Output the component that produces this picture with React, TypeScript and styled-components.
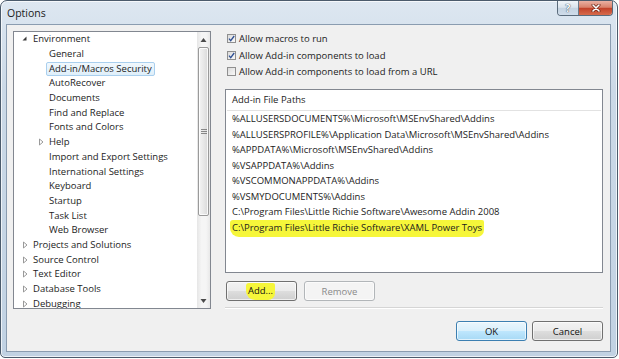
import React from "react";
import styled, { createGlobalStyle } from "styled-components";

const GlobalStyle = createGlobalStyle`
  html, body {
    margin: 0;
    padding: 0;
    background: #ffffff;
  }
  body {
    font-family: "Open Sans", "Noto Sans", "DejaVu Sans", sans-serif;
    font-size: 9.5px;
    color: #1c1c1c;
  }
  * { box-sizing: border-box; }
`;

const Window = styled.div`
  width: 618px;
  height: 358px;
  display: flex;
  flex-direction: column;
  padding: 0 6px 5px 5px;
  border: 1px solid #4b5b6c;
  border-radius: 7px 7px 5px 5px;
  background: linear-gradient(180deg, #dde7f1 0%, #cbd9e7 25%, #c1d2e3 100%);
  box-shadow: inset 0 0 0 1px rgba(255, 255, 255, 0.7);
`;

const TitleBar = styled.div`
  height: 23px;
  display: flex;
  align-items: flex-start;
  justify-content: space-between;
`;

const Title = styled.div`
  padding: 5px 0 0 1px;
  font-size: 10.5px;
  line-height: 14px;
  color: #1a1a1a;
`;

const CaptionGroup = styled.div`
  display: flex;
  height: 15px;
  margin-right: -2px;
  border: 1px solid #5a6b7b;
  border-top: none;
  border-radius: 0 0 4px 4px;
  overflow: hidden;
`;

const CaptionButton = styled.div<{ $close?: boolean }>`
  width: ${(p) => (p.$close ? 34 : 20)}px;
  display: flex;
  align-items: center;
  justify-content: center;
  font-size: 10px;
  font-weight: bold;
  color: #ffffff;
  text-shadow: 0 0 1px #3b4c5e, 0 0 1px #3b4c5e;
  background: ${(p) =>
    p.$close
      ? "linear-gradient(180deg, #eab0a2 0%, #d9826c 45%, #c2422a 52%, #d66b4c 100%)"
      : "linear-gradient(180deg, #f0f4f8 0%, #dbe4ed 45%, #c4d3e1 52%, #cfdcea 100%)"};
  & + & {
    border-left: 1px solid #6a7b8b;
  }
`;

const Client = styled.div`
  flex: 1;
  display: flex;
  flex-direction: column;
  border: 1px solid #8a9cb0;
  background: #f0f0f0;
  padding: 6px 7px 0 6px;
`;

const TopRow = styled.div`
  height: 278px;
  display: flex;
  gap: 14px;
`;

const Tree = styled.div`
  width: 198px;
  height: 278px;
  display: flex;
  border: 1px solid #828790;
  background: #ffffff;
`;

const TreeList = styled.div`
  flex: 1;
  overflow: hidden;
`;

const TreeRow = styled.div<{ $level: number }>`
  height: 14.7px;
  line-height: 14.7px;
  display: flex;
  align-items: center;
  padding-left: ${(p) => 6 + p.$level * 16}px;
  white-space: nowrap;
`;

const Expander = styled.span`
  width: 13px;
  flex: none;
  display: flex;
  align-items: center;
  padding-left: 2px;
`;

const TreeLabel = styled.span<{ $selected?: boolean }>`
  margin-left: ${(p) => (p.$selected ? -3 : 0)}px;
  padding: 0 ${(p) => (p.$selected ? 2 : 0)}px;
  height: 14px;
  line-height: 13px;
  border: ${(p) => (p.$selected ? "1px solid #a9cfee" : "none")};
  border-radius: 2px;
  background: ${(p) =>
    p.$selected ? "linear-gradient(180deg, #f1f8fd 0%, #dfeffa 100%)" : "transparent"};
  line-height: ${(p) => (p.$selected ? 12.5 : 14)}px;
`;

const ScrollBar = styled.div`
  width: 13px;
  display: flex;
  flex-direction: column;
  background: linear-gradient(90deg, #e6e6e6 0%, #f5f5f5 35%, #f5f5f5 70%, #e8e8e8 100%);
`;

const ScrollArrow = styled.div`
  height: 15px;
  flex: none;
  display: flex;
  align-items: center;
  justify-content: center;
`;

const ScrollTrack = styled.div`
  flex: 1;
  padding: 0 1px;
`;

const Thumb = styled.div`
  height: 169px;
  display: flex;
  align-items: center;
  justify-content: center;
  border: 1px solid #9a9a9a;
  border-radius: 2px;
  background: linear-gradient(90deg, #f4f4f4 0%, #e8e8e8 50%, #d9d9d9 100%);
  box-shadow: inset 0 0 0 1px rgba(255, 255, 255, 0.8);
`;

const RightColumn = styled.div`
  flex: 1;
  display: flex;
  flex-direction: column;
`;

const CheckList = styled.div`
  margin-top: -1px;
`;

const CheckRow = styled.label`
  height: 16.7px;
  display: flex;
  align-items: center;
  gap: 3px;
  padding-left: 2px;
  white-space: nowrap;
`;

const PathBox = styled.div`
  margin-top: 9px;
  height: 185px;
  border: 1px solid #828790;
  background: #ffffff;
`;

const PathHeader = styled.div`
  height: 21px;
  line-height: 20px;
  margin: 0 1px;
  padding-left: 5px;
  border-bottom: 1px solid #e2e2e2;
`;

const PathRow = styled.div`
  height: 15.5px;
  line-height: 15.5px;
  padding-left: 6px;
  white-space: nowrap;
`;

const Marker = styled.span`
  margin-left: -2px;
  padding: 1px 2px 3px;
  border-radius: 3px 2px 7px 9px;
  background: #f6f63a;
`;

const ButtonRow = styled.div`
  display: flex;
  gap: 7px;
  margin-top: 8px;
  padding-left: 1px;
`;

const Button = styled.div<{ $disabled?: boolean; $default?: boolean }>`
  width: 71px;
  height: 20px;
  display: flex;
  align-items: center;
  justify-content: center;
  border-radius: 3px;
  border: 1px solid
    ${(p) => (p.$disabled ? "#b2b6b9" : p.$default ? "#3c7fb1" : "#707070")};
  color: ${(p) => (p.$disabled ? "#8a8a8a" : "#111111")};
  background: ${(p) =>
    p.$disabled
      ? "#f4f4f4"
      : p.$default
      ? "linear-gradient(180deg, #eaf6fd 0%, #d9f0fc 48%, #bee6fd 52%, #a7d9f5 100%)"
      : "linear-gradient(180deg, #f2f2f2 0%, #ebebeb 48%, #dddddd 52%, #cfcfcf 100%)"};
  box-shadow: inset 0 0 0 1px rgba(255, 255, 255, 0.65);
`;

const Separator = styled.div`
  margin-top: 6px;
  border-top: 1px solid #d5d5d5;
  border-bottom: 1px solid #ffffff;
`;

const BottomRow = styled.div`
  display: flex;
  justify-content: flex-end;
  gap: 5px;
  margin-top: 12px;
`;

type TreeItem = { label: string; level: number; exp?: "open" | "closed"; selected?: boolean };

const treeItems: TreeItem[] = [
  { label: "Environment", level: 0, exp: "open" },
  { label: "General", level: 1 },
  { label: "Add-in/Macros Security", level: 1, selected: true },
  { label: "AutoRecover", level: 1 },
  { label: "Documents", level: 1 },
  { label: "Find and Replace", level: 1 },
  { label: "Fonts and Colors", level: 1 },
  { label: "Help", level: 1, exp: "closed" },
  { label: "Import and Export Settings", level: 1 },
  { label: "International Settings", level: 1 },
  { label: "Keyboard", level: 1 },
  { label: "Startup", level: 1 },
  { label: "Task List", level: 1 },
  { label: "Web Browser", level: 1 },
  { label: "Projects and Solutions", level: 0, exp: "closed" },
  { label: "Source Control", level: 0, exp: "closed" },
  { label: "Text Editor", level: 0, exp: "closed" },
  { label: "Database Tools", level: 0, exp: "closed" },
  { label: "Debugging", level: 0, exp: "closed" },
];

const paths = [
  "%ALLUSERSDOCUMENTS%\\Microsoft\\MSEnvShared\\Addins",
  "%ALLUSERSPROFILE%\\Application Data\\Microsoft\\MSEnvShared\\Addins",
  "%APPDATA%\\Microsoft\\MSEnvShared\\Addins",
  "%VSAPPDATA%\\Addins",
  "%VSCOMMONAPPDATA%\\Addins",
  "%VSMYDOCUMENTS%\\Addins",
  "C:\\Program Files\\Little Richie Software\\Awesome Addin 2008",
];

const checks = [
  { label: "Allow macros to run", checked: true },
  { label: "Allow Add-in components to load", checked: true },
  { label: "Allow Add-in components to load from a URL", checked: false },
];

const ExpanderIcon = ({ kind }: { kind: "open" | "closed" }) =>
  kind === "open" ? (
    <svg width="6" height="6" viewBox="0 0 6 6">
      <path d="M4.5 0.5 L4.5 4.5 L0.5 4.5 Z" fill="#3a3a3a" />
    </svg>
  ) : (
    <svg width="7" height="8" viewBox="0 0 7 8">
      <path d="M1.5 1 L5 4 L1.5 7 Z" fill="#ffffff" stroke="#8e8e8e" strokeWidth="0.9" />
    </svg>
  );

const CheckBox = ({ checked, id }: { checked: boolean; id: string }) => (
  <svg width="9" height="9" viewBox="0 0 9 9">
    <defs>
      <linearGradient id={id} x1="0" y1="0" x2="1" y2="1">
        <stop offset="0" stopColor="#d9d9d9" />
        <stop offset="1" stopColor="#fbfbfb" />
      </linearGradient>
    </defs>
    <rect x="0.5" y="0.5" width="8" height="8" fill={`url(#${id})`} stroke="#8f8f8f" />
    {checked && (
      <path d="M2 4.6 L3.7 6.6 L7.2 2" fill="none" stroke="#2e4f93" strokeWidth="1.3" />
    )}
  </svg>
);

const CloseGlyph = () => (
  <svg width="10" height="8" viewBox="0 0 10 8">
    <path d="M2 1 L8 7 M8 1 L2 7" stroke="#6b2516" strokeWidth="3" strokeLinecap="round" />
    <path d="M2 1 L8 7 M8 1 L2 7" stroke="#ffffff" strokeWidth="1.6" strokeLinecap="round" />
  </svg>
);

const Grip = () => (
  <svg width="6" height="5" viewBox="0 0 6 5">
    <path d="M0 0.5 H6 M0 2.5 H6 M0 4.5 H6" stroke="#6f6f6f" strokeWidth="0.8" />
  </svg>
);

const Arrow = ({ up }: { up?: boolean }) => (
  <svg width="7" height="4" viewBox="0 0 7 4">
    <path d={up ? "M3.5 0 L6.5 4 L0.5 4 Z" : "M0.5 0 L6.5 0 L3.5 4 Z"} fill="#4a4a4a" />
  </svg>
);

const App = () => {
  return (
    <>
      <GlobalStyle />
      <Window>
        <TitleBar>
          <Title>Options</Title>
          <CaptionGroup>
            <CaptionButton>?</CaptionButton>
            <CaptionButton $close>
              <CloseGlyph />
            </CaptionButton>
          </CaptionGroup>
        </TitleBar>

        <Client>
          <TopRow>
            <Tree>
              <TreeList>
                {treeItems.map((item) => (
                  <TreeRow key={item.label} $level={item.level}>
                    <Expander>{item.exp && <ExpanderIcon kind={item.exp} />}</Expander>
                    <TreeLabel $selected={item.selected}>{item.label}</TreeLabel>
                  </TreeRow>
                ))}
              </TreeList>
              <ScrollBar>
                <ScrollArrow>
                  <Arrow up />
                </ScrollArrow>
                <ScrollTrack>
                  <Thumb>
                    <Grip />
                  </Thumb>
                </ScrollTrack>
                <ScrollArrow>
                  <Arrow />
                </ScrollArrow>
              </ScrollBar>
            </Tree>

            <RightColumn>
              <CheckList>
                {checks.map((c, i) => (
                  <CheckRow key={c.label}>
                    <CheckBox checked={c.checked} id={`cb${i}`} />
                    {c.label}
                  </CheckRow>
                ))}
              </CheckList>

              <PathBox>
                <PathHeader>Add-in File Paths</PathHeader>
                {paths.map((p) => (
                  <PathRow key={p}>{p}</PathRow>
                ))}
                <PathRow>
                  <Marker>C:\Program Files\Little Richie Software\XAML Power Toys</Marker>
                </PathRow>
              </PathBox>

              <ButtonRow>
                <Button>
                  <Marker>Add...</Marker>
                </Button>
                <Button $disabled>Remove</Button>
              </ButtonRow>
              <Separator />
            </RightColumn>
          </TopRow>

          <BottomRow>
            <Button $default>OK</Button>
            <Button>Cancel</Button>
          </BottomRow>
        </Client>
      </Window>
    </>
  );
};

export default App;
